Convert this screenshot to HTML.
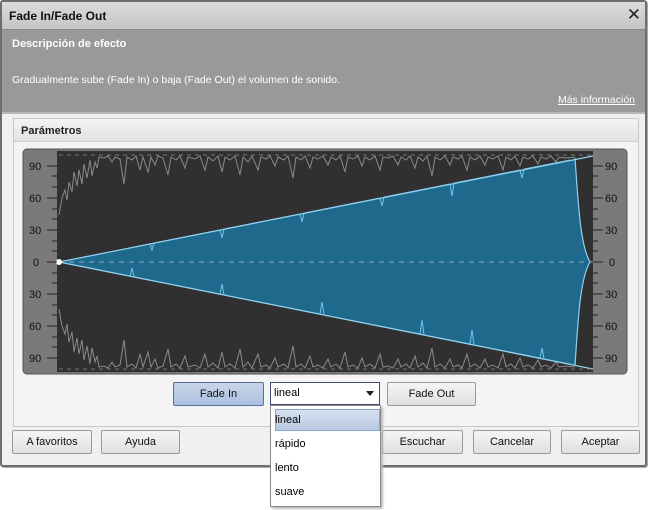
<!DOCTYPE html>
<html><head><meta charset="utf-8">
<style>
*{box-sizing:border-box;margin:0;padding:0}
body{width:650px;height:510px;background:#fff;font-family:"Liberation Sans","DejaVu Sans",sans-serif;position:relative;overflow:hidden}
.win{position:absolute;left:0;top:0;width:647px;height:467px;border:2px solid #6e6e6e;border-radius:3px;background:#f0f0f0;box-shadow:1px 1px 0 #aaa}
.title{position:absolute;left:0;top:0;width:643px;height:28px;background:linear-gradient(#dcdcdc,#c4c4c4);border-bottom:1px solid #8a8a8a}
.title span{position:absolute;left:7px;top:7px;font-size:12px;font-weight:bold;color:#111}
.close{position:absolute;right:4px;top:3px;font-size:17px;color:#222}
.desc{position:absolute;left:0;top:28px;width:643px;height:84px;background:#999;border-bottom:2px solid #b8b8b8}
.desc .h{position:absolute;left:10px;top:8px;font-size:11px;font-weight:bold;color:#fff}
.desc .t{position:absolute;left:10px;top:44px;font-size:10.5px;color:#fff}
.desc .l{position:absolute;right:10px;top:64px;font-size:10.5px;color:#fff;text-decoration:underline}
.grp{position:absolute;left:11px;top:116px;width:626px;height:309px;border:1px solid #c8c8c8;background:#f4f4f4}
.grp .hd{height:23px;background:linear-gradient(#f4f4f4,#e2e2e2);border-bottom:1px solid #cfcfcf;font-size:11px;font-weight:bold;color:#222;padding:6px 0 0 7px}
.btn{position:absolute;height:24px;border:1px solid #9a9a9a;border-radius:2px;background:linear-gradient(#f6f6f6,#e0e0e0);font-size:11px;color:#111;text-align:center;line-height:22px}
.combo{position:absolute;left:270px;top:382px;width:110px;height:23px;border:1px solid #3c4a72;background:#fff;font-size:11px;line-height:21px;padding-left:3px}
.combo:after{content:"";position:absolute;right:5px;top:8px;border:4px solid transparent;border-top:5px solid #222}
.list{position:absolute;left:270px;top:405px;width:111px;height:102px;border:1px solid #8a8a8a;background:#fff;box-shadow:2px 2px 2px #bbb;font-size:11px}
.list div{position:absolute;left:4px}
.sel{position:absolute;left:2px;top:3px;width:105px;height:22px;background:linear-gradient(#d6e0ef,#b9c9e2);border:1px solid #8fa3c8}
</style></head><body>
<div class="win">
 <div class="title"><span>Fade In/Fade Out</span><div class="close">✕</div></div>
 <div class="desc"><div class="h">Descripción de efecto</div><div class="t">Gradualmente sube (Fade In) o baja (Fade Out) el volumen de sonido.</div><div class="l">Más información</div></div>
 <div class="grp"><div class="hd">Parámetros</div></div>
</div>
<svg style="position:absolute;left:0;top:0" width="650" height="510">
 <defs>
  <path id="tn" d="M59,215 L62,198 65,190 67,200 69,182 72,192 74,172 77,186 79,170 82,184 84,164 87,178 90,160 92,176 95,162 97,168 99,157 104,158 108,156 112,162 115,157 120,159 124,184 127,157 132,160 136,156 140,170 143,157 148,172 151,157 155,165 158,156 163,158 168,175 171,157 176,160 180,156 185,168 188,157 195,159 200,156 205,170 208,157 213,161 218,156 222,172 225,157 230,160 235,156 240,175 243,157 248,162 252,156 258,170 261,157 266,159 270,156 275,166 278,157 284,160 288,156 293,178 296,157 301,160 305,156 310,168 313,157 318,159 323,156 328,165 331,157 336,160 340,156 345,172 348,157 353,159 358,156 362,166 365,157 370,160 375,156 380,170 383,157 388,158 393,156 398,165 401,157 406,160 410,156 415,168 418,157 423,161 427,156 432,176 435,157 440,160 445,156 450,165 453,157 458,159 462,156 467,170 470,157 475,160 480,156 485,165 488,157 493,159 498,156 503,170 506,157 511,160 515,156 520,166 523,157 528,159 533,156 538,164 541,157 546,159 551,156 556,162 559,157 565,158 575,157"/>
 </defs>
 <rect x="23" y="149" width="604" height="225" rx="4" fill="#7a7a7a" stroke="#555"/>
 <rect x="57" y="151" width="536" height="221" fill="#303030"/>
 <use href="#tn" fill="none" stroke="#8a8a8a"/>
 <use href="#tn" fill="none" stroke="#8a8a8a" transform="translate(0,524) scale(1,-1)"/>
 <path d="M59,262 L575,159 C578,200 580,245 590,262 C580,279 578,320 575,366 Z" fill="#1f6a8c"/>
 <path d="M80,258 L150,244 152,250 154,243 220,230 222,238 224,229 300,214 302,222 304,213 380,198 382,206 384,197 450,184 452,196 454,183 520,170 522,178 524,169 570,160" fill="none" stroke="#6cc4ea"/>
 <path d="M80,266 L130,276 132,268 134,277 220,294 222,284 224,295 320,314 322,302 324,315 420,334 422,320 424,335 470,344 472,330 474,345 540,358 542,348 544,359 570,364" fill="none" stroke="#6cc4ea"/>
 <line x1="59" y1="262" x2="593" y2="156" stroke="#8fd0ee" stroke-width="1.2"/>
 <line x1="59" y1="262" x2="593" y2="369" stroke="#8fd0ee" stroke-width="1.2"/>
 <path d="M575,158 C578,200 580,245 590,262 C580,279 578,320 575,366" fill="none" stroke="#8fd0ee" stroke-width="1.2"/>
 <line x1="59" y1="262" x2="593" y2="262" stroke="#9ab" stroke-dasharray="5,5"/>
 <line x1="59" y1="155" x2="593" y2="155" stroke="#777" stroke-dasharray="4,4"/>
 <line x1="59" y1="369" x2="593" y2="369" stroke="#777" stroke-dasharray="4,4"/>
 <circle cx="59" cy="262" r="3" fill="#fff"/>
 <g stroke="#222">
  <path d="M47,166H57M52,176H57M52,187H57M47,198H57M52,209H57M52,219H57M47,230H57M52,241H57M52,251H57M47,262H57M52,273H57M52,283H57M47,294H57M52,305H57M52,315H57M47,326H57M52,337H57M52,347H57M47,358H57"/>
  <path d="M593,166H603M593,176H598M593,187H598M593,198H603M593,209H598M593,219H598M593,230H603M593,241H598M593,251H598M593,262H603M593,273H598M593,283H598M593,294H603M593,305H598M593,315H598M593,326H603M593,337H598M593,347H598M593,358H603"/>
 </g>
 <g font-size="11" fill="#111" font-family="Liberation Sans,sans-serif">
  <text x="29" y="170">90</text><text x="29" y="202">60</text><text x="29" y="234">30</text><text x="33" y="266">0</text><text x="29" y="298">30</text><text x="29" y="330">60</text><text x="29" y="362">90</text>
  <text x="605" y="170">90</text><text x="605" y="202">60</text><text x="605" y="234">30</text><text x="609" y="266">0</text><text x="605" y="298">30</text><text x="605" y="330">60</text><text x="605" y="362">90</text>
 </g>
</svg>
<div class="btn" style="left:173px;top:382px;width:91px;background:linear-gradient(#c9d6ea,#a9bfe0);border-color:#5a6f98">Fade In</div>
<div class="combo">lineal</div>
<div class="btn" style="left:387px;top:382px;width:89px">Fade Out</div>
<div class="btn" style="left:12px;top:430px;width:80px">A favoritos</div>
<div class="btn" style="left:101px;top:430px;width:79px">Ayuda</div>
<div class="btn" style="left:382px;top:430px;width:81px">Escuchar</div>
<div class="btn" style="left:473px;top:430px;width:78px">Cancelar</div>
<div class="btn" style="left:561px;top:430px;width:79px">Aceptar</div>
<div class="list"><div class="sel"></div><div style="top:8px">lineal</div><div style="top:32px">rápido</div><div style="top:56px">lento</div><div style="top:80px">suave</div></div>
</body></html>
